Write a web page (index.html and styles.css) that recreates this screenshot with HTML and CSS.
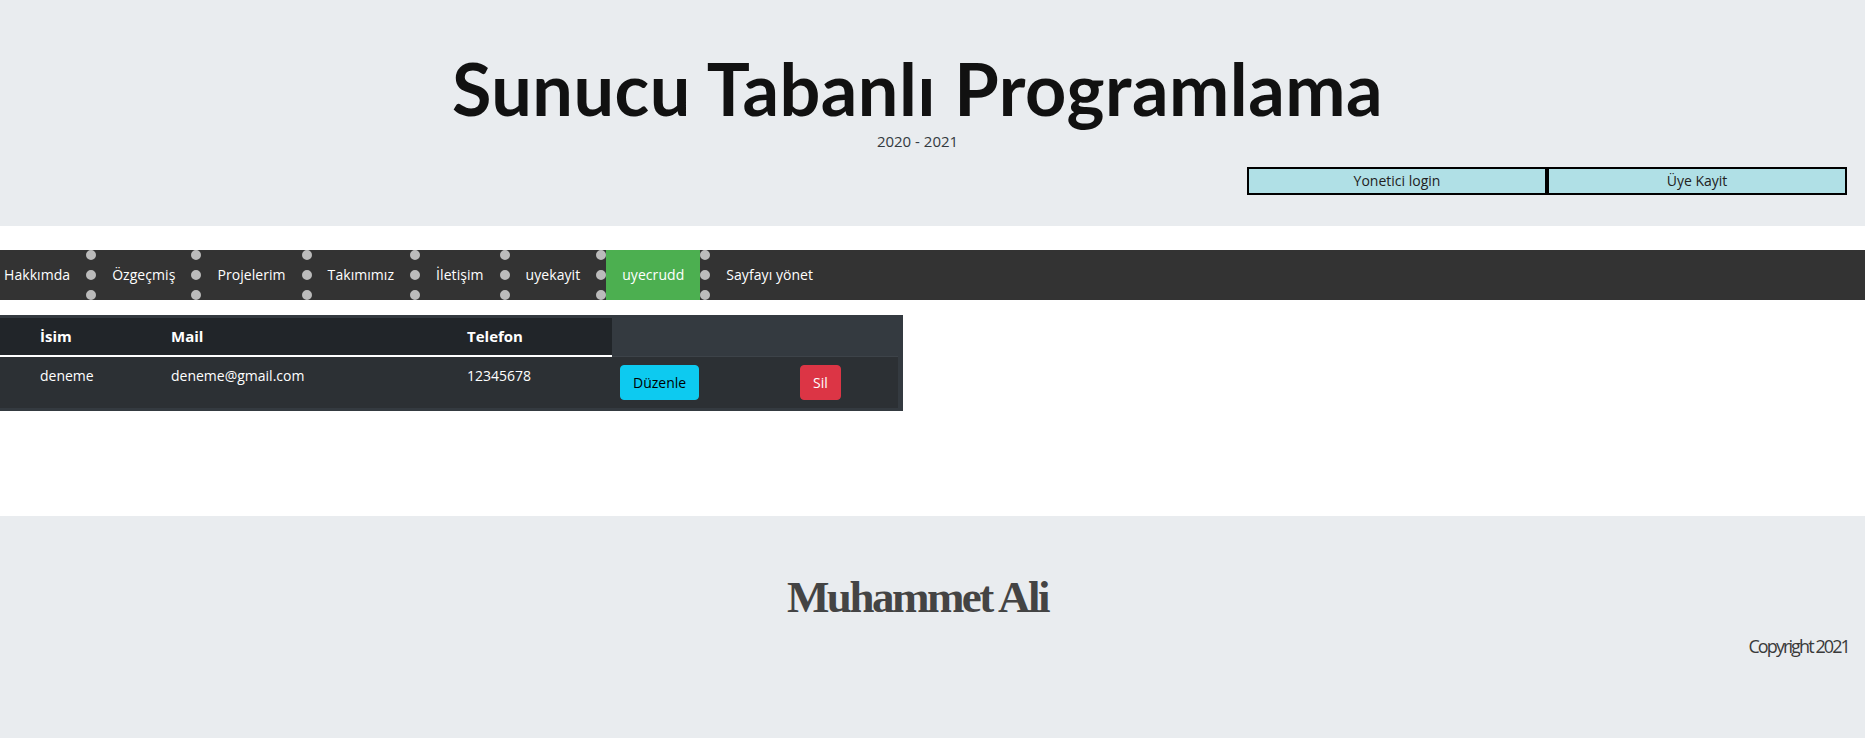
FILE: index.html
```html
<!DOCTYPE html>
<html lang="tr">
<head>
<meta charset="utf-8">
<title>Sunucu Tabanlı Programlama</title>
<link rel="stylesheet" href="styles.css">
</head>
<body>
<header class="jumbo">
  <h1 class="title">Sunucu Tabanlı Programlama</h1>
  <p class="years">2020 - 2021</p>
  <div class="auth">
    <a class="auth-btn" href="#">Yonetici login</a>
    <a class="auth-btn" href="#">Üye Kayit</a>
  </div>
</header>

<nav class="menu">
  <ul class="menu-list">
    <li class="menu-item first"><a href="#">Hakkımda</a></li>
    <li class="menu-item"><a href="#">Özgeçmiş</a></li>
    <li class="menu-item"><a href="#">Projelerim</a></li>
    <li class="menu-item"><a href="#">Takımımız</a></li>
    <li class="menu-item"><a href="#">İletişim</a></li>
    <li class="menu-item"><a href="#">uyekayit</a></li>
    <li class="menu-item active"><a href="#">uyecrudd</a></li>
    <li class="menu-item last"><a href="#">Sayfayı yönet</a></li>
  </ul>
</nav>

<main class="content">
  <div class="table-wrap">
    <table class="users">
      <colgroup>
        <col class="c0"><col class="c1"><col class="c2"><col class="c3"><col class="c4"><col class="c5">
      </colgroup>
      <thead>
        <tr><th></th><th>İsim</th><th>Mail</th><th>Telefon</th></tr>
      </thead>
      <tbody>
        <tr>
          <td></td>
          <td>deneme</td>
          <td>deneme@gmail.com</td>
          <td>12345678</td>
          <td><button class="btn btn-info">Düzenle</button></td>
          <td><button class="btn btn-danger">Sil</button></td>
        </tr>
      </tbody>
    </table>
  </div>
</main>

<footer class="footer">
  <h2 class="footer-name">Muhammet Ali</h2>
  <p class="copyright">Copyright 2021</p>
</footer>
</body>
</html>
```

FILE: styles.css
```css
html, body {
  margin: 0;
  padding: 0;
}
body {
  background: #ffffff;
  font-family: "Open Sans", "Noto Sans", sans-serif;
  color: #212529;
}

/* Header */
.jumbo {
  background: #e9ecef;
  padding: 45px 18px 31px 0;
}
.title {
  margin: 0 12px 0 0;
  text-align: center;
  font-family: Lato, "Noto Sans", sans-serif;
  font-weight: 700;
  font-size: 72px;
  line-height: 86px;
  letter-spacing: 0.5px;
  color: #111111;
}
.years {
  margin: 0 12px 0 0;
  text-align: center;
  font-size: 15px;
  line-height: 20px;
  color: #343a40;
}
.auth {
  display: flex;
  justify-content: flex-end;
  margin-top: 16px;
}
.auth-btn {
  box-sizing: border-box;
  width: 300px;
  height: 28px;
  border: 2px solid #000000;
  background: #b0e0e6;
  color: #222222;
  text-decoration: none;
  font-size: 14px;
  line-height: 24px;
  text-align: center;
}

/* Navigation */
.menu {
  margin-top: 24px;
  background: #333333;
}
.menu-list {
  list-style: none;
  margin: 0;
  padding: 0;
  display: flex;
  height: 50px;
}
.menu-item {
  border-right: 10px dotted #bbbbbb;
}
.menu-item.last {
  border-right: none;
}
.menu-item a {
  display: block;
  padding: 0 16px;
  line-height: 50px;
  font-size: 14px;
  letter-spacing: 0.06px;
  color: #ffffff;
  text-decoration: none;
}
.menu-item.first a {
  padding-left: 4px;
}
.menu-item.active a {
  background: #4caf50;
}

/* Table */
.content {
  padding-top: 15px;
  margin-bottom: 105px;
}
.table-wrap {
  width: 898px;
  padding: 3px 5px 3px 0;
  background: #343a40;
}
.users {
  width: 898px;
  table-layout: fixed;
  border-collapse: collapse;
  color: #ffffff;
  font-size: 14px;
}
.c0 { width: 32px; }
.c1 { width: 131px; }
.c2 { width: 296px; }
.c3 { width: 153px; }
.c4 { width: 180px; }
.c5 { width: 106px; }
.users th {
  background: #212529;
  text-align: left;
  font-weight: 700;
  font-size: 15px;
  line-height: 21px;
  padding: 8px;
  border-bottom: 2px solid #ffffff;
}
.users td {
  background: #2c3034;
  padding: 8px;
  line-height: 21px;
  vertical-align: top;
  border-top: 1px solid #3d4349;
}
.btn {
  font-family: "Open Sans", "Noto Sans", sans-serif;
  font-size: 14px;
  line-height: 21px;
  padding: 6px 12px;
  border-radius: 4px;
  border: 1px solid transparent;
  cursor: pointer;
}
.btn-info {
  background: #0dcaf0;
  border-color: #0dcaf0;
  color: #000000;
}
.btn-danger {
  background: #dc3545;
  border-color: #dc3545;
  color: #ffffff;
}

/* Footer */
.footer {
  background: #e9ecef;
  padding: 55px 16px 80px 0;
  margin-bottom: 11px;
}
.footer-name {
  margin: 0 14px 0 0;
  text-align: center;
  font-family: "Liberation Serif", "Times New Roman", serif;
  font-weight: 700;
  font-size: 45px;
  line-height: 52px;
  letter-spacing: -2.5px;
  color: #444444;
}
.copyright {
  margin: 11px 0 0 0;
  text-align: right;
  font-size: 18px;
  line-height: 24px;
  letter-spacing: -1.9px;
  color: #3a3a3a;
}
```
